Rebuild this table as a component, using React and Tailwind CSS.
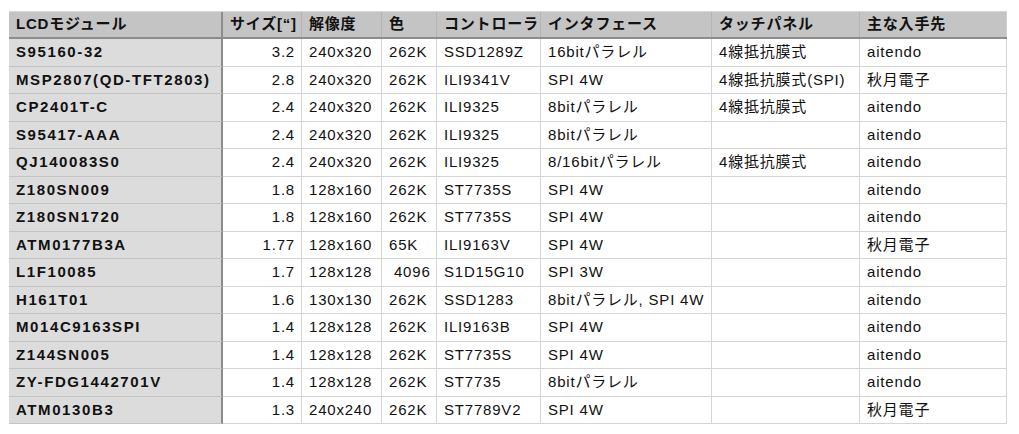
import React from 'react';

const headers = ['LCDモジュール', 'サイズ[“]', '解像度', '色', 'コントローラ', 'インタフェース', 'タッチパネル', '主な入手先'];

const rows = [
    ['S95160-32', '3.2', '240x320', '262K', 'SSD1289Z', '16bitパラレル', '4線抵抗膜式', 'aitendo'],
    ['MSP2807(QD-TFT2803)', '2.8', '240x320', '262K', 'ILI9341V', 'SPI 4W', '4線抵抗膜式(SPI)', '秋月電子'],
    ['CP2401T-C', '2.4', '240x320', '262K', 'ILI9325', '8bitパラレル', '4線抵抗膜式', 'aitendo'],
    ['S95417-AAA', '2.4', '240x320', '262K', 'ILI9325', '8bitパラレル', '', 'aitendo'],
    ['QJ140083S0', '2.4', '240x320', '262K', 'ILI9325', '8/16bitパラレル', '4線抵抗膜式', 'aitendo'],
    ['Z180SN009', '1.8', '128x160', '262K', 'ST7735S', 'SPI 4W', '', 'aitendo'],
    ['Z180SN1720', '1.8', '128x160', '262K', 'ST7735S', 'SPI 4W', '', 'aitendo'],
    ['ATM0177B3A', '1.77', '128x160', '65K', 'ILI9163V', 'SPI 4W', '', '秋月電子'],
    ['L1F10085', '1.7', '128x128', ' 4096', 'S1D15G10', 'SPI 3W', '', 'aitendo'],
    ['H161T01', '1.6', '130x130', '262K', 'SSD1283', '8bitパラレル, SPI 4W', '', 'aitendo'],
    ['M014C9163SPI', '1.4', '128x128', '262K', 'ILI9163B', 'SPI 4W', '', 'aitendo'],
    ['Z144SN005', '1.4', '128x128', '262K', 'ST7735S', 'SPI 4W', '', 'aitendo'],
    ['ZY-FDG1442701V', '1.4', '128x128', '262K', 'ST7735', '8bitパラレル', '', 'aitendo'],
    ['ATM0130B3', '1.3', '240x240', '262K', 'ST7789V2', 'SPI 4W', '', '秋月電子'],
];

const grid = 'grid grid-cols-[214px_79px_80px_55px_104px_171px_148px_147px]';

const App = () => {
    return (
        <div className="w-[1019px] h-[434px] bg-white pt-[11px] pl-[9px] font-['Liberation_Sans','Noto_Sans_CJK_JP',sans-serif] text-[15px] text-[#111] tracking-[0.8px]">
            <div className="w-[998px] border-t border-[#d6d6d6]">
                {/* header */}
                <div className={`${grid} h-[27px] bg-[#c4c4c4] border-b-2 border-[#8c8c8c] font-bold`}>
                    {headers.map((h, i) => (
                        <div
                            key={i}
                            className={`flex items-center px-[7px] whitespace-pre ${i === 0 ? 'border-r-2 border-[#8c8c8c]' : 'border-r border-[#b4b4b4]'} ${i === 7 ? 'border-r-[#d0d0d0]' : ''}`}
                        >
                            {h}
                        </div>
                    ))}
                </div>

                {rows.map((r, ri) => (
                    <div key={ri} className={`${grid} h-[27.5px]`}>
                        {r.map((c, ci) => (
                            <div
                                key={ci}
                                className={`flex items-center whitespace-pre border-b border-[#d4d4d4] ${
                                    ci === 0
                                        ? 'bg-[#dcdcdc] font-bold tracking-[1.6px] px-[7px] border-r-2 border-r-[#8c8c8c] border-b-[#c4c4c4]'
                                        : 'border-r border-r-[#d4d4d4] px-[7px]'
                                } ${ci === 1 ? 'justify-end pr-[6px]' : ''}`}
                            >
                                {c}
                            </div>
                        ))}
                    </div>
                ))}
            </div>
        </div>
    );
};

export default App;
